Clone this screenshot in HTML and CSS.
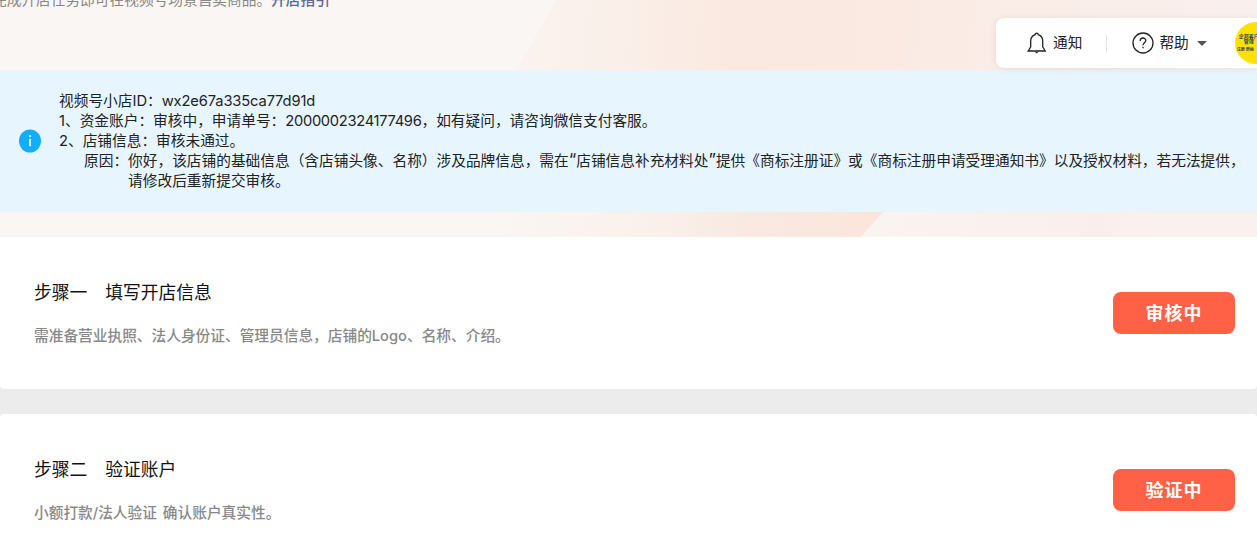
FILE: index.html
```html
<!DOCTYPE html>
<html lang="zh-CN">
<head>
    <meta charset="UTF-8">
    <title>视频号小店</title>
    <link rel="stylesheet" href="styles.css">
</head>
<body>
<div class="hero">
    <svg class="hero-bg" viewBox="0 0 1257 237" preserveAspectRatio="none">
        <defs>
            <linearGradient id="peach" x1="510" y1="0" x2="1257" y2="40" gradientUnits="userSpaceOnUse">
                <stop offset="0" stop-color="#faf3ef"/>
                <stop offset="0.15" stop-color="#faefe9"/>
                <stop offset="0.3" stop-color="#fae9e0"/>
                <stop offset="0.5" stop-color="#faeae2"/>
                <stop offset="0.7" stop-color="#faede8"/>
                <stop offset="1" stop-color="#f9efed"/>
            </linearGradient>
            <linearGradient id="peach2" x1="500" y1="0" x2="883" y2="0" gradientUnits="userSpaceOnUse">
                <stop offset="0" stop-color="#faf6f3"/>
                <stop offset="0.35" stop-color="#faf1ec"/>
                <stop offset="0.65" stop-color="#f9e9e1"/>
                <stop offset="1" stop-color="#fae5db"/>
            </linearGradient>
            <linearGradient id="pink" x1="860" y1="0" x2="1257" y2="0" gradientUnits="userSpaceOnUse">
                <stop offset="0" stop-color="#faf4f1"/>
                <stop offset="0.6" stop-color="#f9eeec"/>
                <stop offset="0.7" stop-color="#faf0ed"/>
                <stop offset="1" stop-color="#faf1ee"/>
            </linearGradient>
        </defs>
        <path d="M557 0H1257V80H510Z" fill="url(#peach)"/>
        <path d="M500 200H894L861 237H500Z" fill="url(#peach2)"/>
        <path d="M894 200H1257V237H861Z" fill="url(#pink)"/>
    </svg>

    <div class="top">
        <p class="intro">完成开店任务即可在视频号场景售卖商品。<a class="guide">开店指引</a></p>
        <div class="toolbar">
            <span class="tool">
                <svg width="20" height="22" viewBox="0 0 20 22" fill="none" stroke="#222" stroke-width="1.3">
                    <path d="M1.2 19H18.2L15.7 14.8V9C15.7 5.2 13.2 3.4 11.2 2.7C11.2 .6 8.2 .6 8.2 2.7C6.2 3.4 3.7 5.2 3.7 9V14.8L1.2 19Z"/>
                    <path d="M7.9 19.8H11.5L9.7 21.5Z" fill="#222" stroke="none"/>
                </svg>
                <span class="label">通知</span>
            </span>
            <span class="line"></span>
            <span class="tool help">
                <svg width="22" height="22" viewBox="0 0 22 22" fill="none" stroke="#222" stroke-width="1.3">
                    <circle cx="11" cy="11" r="10"/>
                    <path d="M8.2 8.9C8.2 5 13.8 5.2 13.8 8.6C13.8 10.7 11 10.9 11 13.2M11 14.7V16.2"/>
                </svg>
                <span class="label">帮助</span>
                <i class="arrow"></i>
            </span>
            <div class="avatar">
                <b>企邦客户</b>
                <b class="second">管理</b>
                <b class="small">注册 商标</b>
            </div>
        </div>
    </div>

    <div class="notice">
        <svg class="info" width="22" height="24" viewBox="0 0 22 24">
            <ellipse cx="11" cy="12" rx="11" ry="11.5" fill="#10aeff"/>
            <path d="M10.1 6.3H11.9V8.1H10.1ZM10.2 9.7H11.8V17.3H10.2Z" fill="#fff"/>
        </svg>
        <div class="notice-text">
            <p>视频号小店ID：<span class="shop-id">wx2e67a335ca77d91d</span></p>
            <p>1、资金账户：审核中，申请单号：<span class="num">2000002324177496</span>，如有疑问，请咨询微信支付客服。</p>
            <p>2、店铺信息：审核未通过。</p>
            <div class="reason">
                <span>原因：</span>
                <p>你好，该店铺的基础信息（含店铺头像、名称）涉及品牌信息，需在<span class="quote">“</span>店铺信息补充材料处<span class="quote">”</span>提供《商标注册证》或《商标注册申请受理通知书》以及授权材料，若无法提供，<br>请修改后重新提交审核。</p>
            </div>
        </div>
    </div>
</div>

<div class="card">
    <div>
        <h3>步骤一　填写开店信息</h3>
        <p>需准备营业执照、法人身份证、管理员信息，店铺的Logo、名称、介绍。</p>
    </div>
    <button class="btn">审核中</button>
</div>

<div class="card">
    <div>
        <h3>步骤二　验证账户</h3>
        <p class="verify">小额打款/法人验证 确认账户真实性。</p>
    </div>
    <button class="btn">验证中</button>
</div>
</body>
</html>
```
FILE: styles.css
```css
* {
    margin: 0;
    padding: 0;
    box-sizing: border-box;
}

body {
    height: 547px;
    overflow: hidden;
    background: #ececec;
    font-family: Inter, "Noto Sans CJK SC", sans-serif;
    font-size: 14.7px;
    color: #222;
}

.hero {
    position: relative;
    height: 237px;
    background: #faf6f3;
    overflow: hidden;
}

.hero-bg {
    position: absolute;
    left: 0;
    top: 0;
    width: 100%;
    height: 100%;
}

.top {
    position: relative;
    z-index: 2;
    display: flex;
    justify-content: space-between;
    height: 70px;
}

.intro {
    margin: -10px 0 0 -8px;
    line-height: 20px;
    color: #888;
    white-space: nowrap;
}

.guide {
    color: #576b95;
    font-weight: 500;
}

.toolbar {
    display: flex;
    align-items: center;
    width: 261px;
    height: 50px;
    margin-top: 18px;
    padding-left: 31px;
    background: #fff;
    border-radius: 8px 0 0 8px;
    box-shadow: 0 1px 8px rgba(0, 0, 0, .07);
}

.tool {
    display: flex;
    flex: none;
    align-items: center;
    gap: 6px;
    white-space: nowrap;
}

.label {
    margin-top: -3px;
}

.line {
    flex: none;
    width: 1px;
    height: 17px;
    margin: 0 25px 0 24px;
    background: #e4e4e4;
}

.help {
    gap: 5px;
}

.arrow {
    margin-left: 3px;
    border: 5px solid transparent;
    border-top: 5px solid #555;
    border-bottom: 0;
}

.avatar {
    flex: none;
    width: 42px;
    height: 42px;
    margin-left: 28px;
    padding-top: 12px;
    border-radius: 50%;
    background: #ffe100;
    color: #26466d;
    overflow: hidden;
}

.avatar b {
    display: block;
    padding-left: 4px;
    font-size: 5px;
    line-height: 5px;
    white-space: nowrap;
}

.avatar .second {
    padding-left: 9px;
}

.avatar .small {
    padding: 3px 0 0 2px;
    font-size: 4px;
}

.notice {
    position: relative;
    display: flex;
    align-items: center;
    height: 142px;
    padding-left: 19px;
    background: #e7f5ff;
}

.info {
    flex: none;
    margin-right: 18px;
}

.notice-text {
    line-height: 20px;
    white-space: nowrap;
}

.shop-id {
    letter-spacing: -.12px;
}

.num {
    letter-spacing: -.3px;
}

.quote {
    font-size: 17px;
    line-height: 1;
}

.reason {
    display: flex;
    padding-left: 25px;
}

.card {
    display: flex;
    justify-content: space-between;
    align-items: center;
    height: 152px;
    margin-bottom: 25px;
    padding: 0 22px 0 34px;
    background: #fff;
    border-radius: 4px;
}

.hero + .card {
    border-radius: 0 0 4px 4px;
}

.card h3 {
    margin-bottom: 19px;
    font-size: 17.8px;
    line-height: 26px;
    font-weight: 400;
    color: #111;
}

.card p {
    line-height: 22px;
    font-weight: 500;
    color: #888;
}

.card .verify {
    word-spacing: 2px;
}

.btn {
    width: 122px;
    height: 42px;
    padding-bottom: 2px;
    border: 0;
    border-radius: 8px;
    background: #ff6146;
    color: #fff;
    font-family: inherit;
    font-size: 18px;
    font-weight: 700;
    letter-spacing: 1px;
}
```
